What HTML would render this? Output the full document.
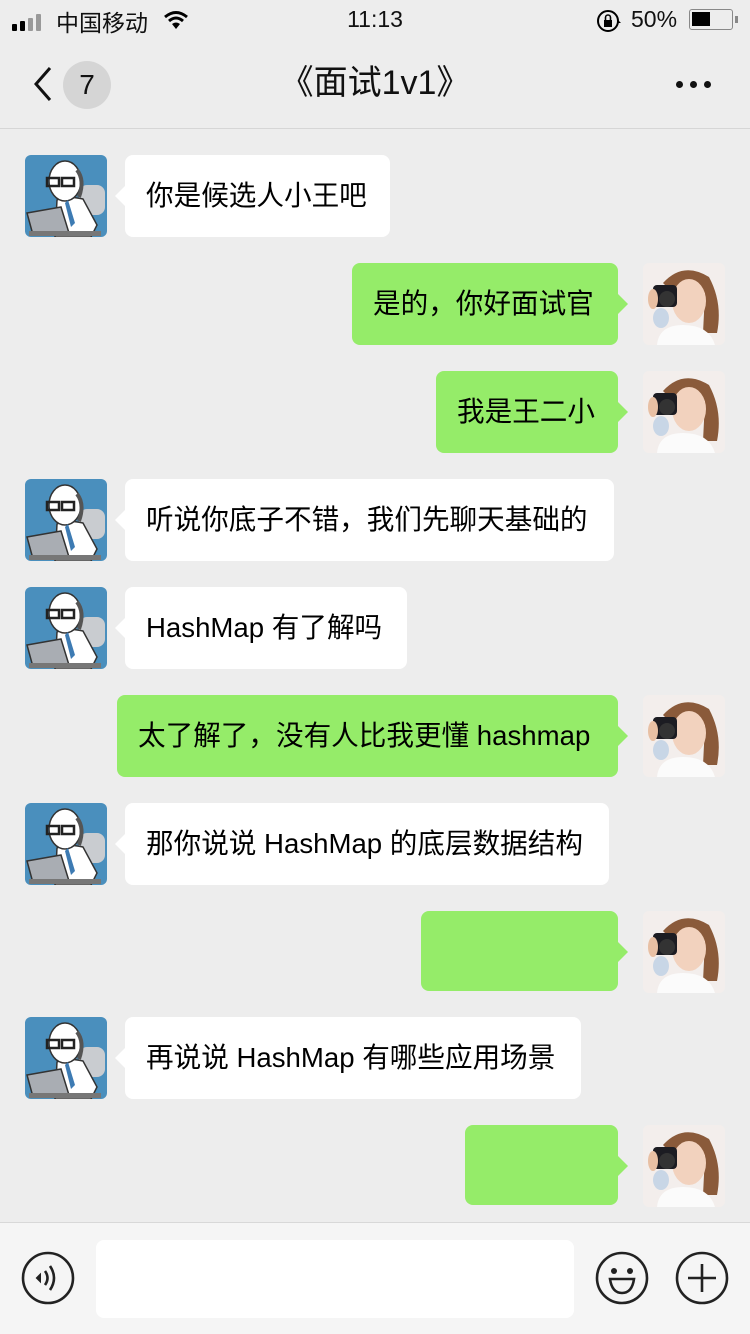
<!DOCTYPE html>
<html><head><meta charset="utf-8"><style>
*{margin:0;padding:0;box-sizing:border-box}
body{width:750px;height:1334px;background:#ededed;position:relative;overflow:hidden;font-family:"Liberation Sans","Noto Sans CJK SC",sans-serif;color:#111}
.abs{position:absolute}
.b{position:absolute;height:82px;border-radius:8px;font-size:27.6px;line-height:82px;padding:0 21px;white-space:nowrap;color:#000}
.l{background:#fff;left:125px}
.l:before{content:"";position:absolute;left:-10px;top:31px;border:10px solid transparent;border-left:0;border-right-color:#fff}
.r{background:#95ec69;right:132px}
.r:after{content:"";position:absolute;right:-10px;top:31px;border:10px solid transparent;border-right:0;border-left-color:#95ec69}
.av{position:absolute;width:82px;height:82px;border-radius:6px;overflow:hidden}
.t{left:25px}.g{left:643px}
</style></head><body>
<svg width="0" height="0" style="position:absolute"><defs>
<symbol id="tch" viewBox="0 0 82 82"><rect width="82" height="82" fill="#4a8fbd"/><rect x="54" y="30" width="26" height="30" rx="8" fill="#c9ccd0"/><path d="M30 82 L32 45 Q40 40 58 44 L72 70 L66 82Z" fill="#fff" stroke="#333" stroke-width="1.5"/><ellipse cx="40" cy="26" rx="16" ry="20" fill="#fff" stroke="#333" stroke-width="1.5"/><path d="M52 15 Q60 25 54 42" stroke="#555" stroke-width="4" fill="none"/><rect x="22" y="23" width="12" height="8" fill="none" stroke="#222" stroke-width="2.5"/><rect x="37" y="23" width="12" height="8" fill="none" stroke="#222" stroke-width="2.5"/><path d="M43 45 L50 68 L46 72 L40 48Z" fill="#3d7bb3"/><path d="M2 58 L36 52 L44 78 L8 80Z" fill="#a9adb3" stroke="#333" stroke-width="1.5"/><rect x="4" y="76" width="72" height="5" fill="#777"/></symbol>
<symbol id="girl" viewBox="0 0 82 82"><rect width="82" height="82" fill="#f3eeec"/><path d="M20 20 Q40 -2 66 14 Q80 40 74 70 L60 70 L62 30 L30 30Z" fill="#8a5a3a"/><ellipse cx="46" cy="38" rx="17" ry="22" fill="#f2d2be"/><path d="M14 82 Q16 62 40 62 Q66 62 72 82Z" fill="#fbfbfb"/><rect x="10" y="22" width="24" height="22" rx="4" fill="#1c1c22"/><circle cx="24" cy="36" r="8" fill="#333"/><ellipse cx="18" cy="55" rx="8" ry="10" fill="#c8d6e6"/><ellipse cx="10" cy="36" rx="5" ry="10" fill="#e8c0a4"/></symbol>
</defs></svg>

<div class="abs" style="left:12px;top:14px;display:flex;align-items:flex-end;gap:3px">
<div style="width:5px;height:7px;background:#000;border-radius:1px"></div><div style="width:5px;height:10px;background:#000;border-radius:1px"></div><div style="width:5px;height:13px;background:#999;border-radius:1px"></div><div style="width:5px;height:17px;background:#999;border-radius:1px"></div></div>
<div class="abs" style="left:56px;top:4px;font-size:23px;color:#111">中国移动</div>
<svg class="abs" style="left:163px;top:10px" width="26" height="20" viewBox="0 0 26 20"><path d="M2 7 Q13 -2 24 7" stroke="#000" stroke-width="3" fill="none"/><path d="M6 11 Q13 5 20 11" stroke="#000" stroke-width="3" fill="none"/><path d="M9 14 L13 19 L17 14 Q13 11 9 14Z" fill="#000"/></svg>
<div class="abs" style="left:0;width:750px;top:6px;text-align:center;font-size:23px">11:13</div>
<svg class="abs" style="left:596px;top:8px" width="26" height="26" viewBox="0 0 26 26"><circle cx="12" cy="13" r="10" stroke="#000" stroke-width="2" fill="none"/><rect x="8" y="12" width="8" height="7" fill="#000"/><path d="M9.5 12 V9.5 a2.5 2.5 0 0 1 5 0 V12" stroke="#000" stroke-width="1.6" fill="none"/><path d="M22 12 l3 3 h-4z" fill="#000"/></svg>
<div class="abs" style="left:631px;top:6px;font-size:23px">50%</div>
<div class="abs" style="left:689px;top:9px;width:44px;height:21px;border:1.5px solid #888;border-radius:3px"><div style="margin:2px;width:18px;height:14px;background:#000"></div></div>
<div class="abs" style="left:735px;top:16px;width:3px;height:7px;background:#888"></div>

<svg class="abs" style="left:32px;top:66px" width="22" height="36" viewBox="0 0 22 36"><path d="M18 2 L4 18 L18 34" stroke="#111" stroke-width="3" fill="none"/></svg>
<div class="abs" style="left:63px;top:61px;width:48px;height:48px;border-radius:24px;background:#d5d5d5;text-align:center;line-height:48px;font-size:28px">7</div>
<div class="abs" style="left:0;width:750px;top:61px;text-align:center;font-size:34px;line-height:44px">《面试1v1》</div>
<div class="abs" style="left:676px;top:81px;display:flex;gap:7px"><i style="width:7px;height:7px;border-radius:4px;background:#111"></i><i style="width:7px;height:7px;border-radius:4px;background:#111"></i><i style="width:7px;height:7px;border-radius:4px;background:#111"></i></div>
<div class="abs" style="left:0;top:128px;width:750px;height:1px;background:#d6d6d6"></div>

<svg class="av t" style="top:155px"><use href="#tch"/></svg><div class="b l" style="top:155px;width:265px">你是候选人小王吧</div>
<svg class="av g" style="top:263px"><use href="#girl"/></svg><div class="b r" style="top:263px;width:266px">是的，你好面试官</div>
<svg class="av g" style="top:371px"><use href="#girl"/></svg><div class="b r" style="top:371px;width:182px">我是王二小</div>
<svg class="av t" style="top:479px"><use href="#tch"/></svg><div class="b l" style="top:479px;width:489px">听说你底子不错，我们先聊天基础的</div>
<svg class="av t" style="top:587px"><use href="#tch"/></svg><div class="b l" style="top:587px;width:282px">HashMap 有了解吗</div>
<svg class="av g" style="top:695px"><use href="#girl"/></svg><div class="b r" style="top:695px;width:501px">太了解了，没有人比我更懂 hashmap</div>
<svg class="av t" style="top:803px"><use href="#tch"/></svg><div class="b l" style="top:803px;width:484px">那你说说 HashMap 的底层数据结构</div>
<svg class="av g" style="top:911px"><use href="#girl"/></svg><div class="b r" style="top:911px;width:197px;height:80px"></div>
<svg class="av t" style="top:1017px"><use href="#tch"/></svg><div class="b l" style="top:1017px;width:456px">再说说 HashMap 有哪些应用场景</div>
<svg class="av g" style="top:1125px"><use href="#girl"/></svg><div class="b r" style="top:1125px;width:153px;height:80px"></div>

<div class="abs" style="left:0;top:1222px;width:750px;height:112px;background:#f5f5f5;border-top:1px solid #d8d8d8"></div>
<div class="abs" style="left:96px;top:1240px;width:478px;height:78px;background:#fff;border-radius:8px"></div>
<svg class="abs" style="left:20px;top:1250px" width="56" height="56" viewBox="0 0 56 56"><circle cx="28" cy="28" r="25" stroke="#222" stroke-width="2.6" fill="none"/><path d="M20 25 l-3 3 l3 3z" fill="#222" stroke="#222" stroke-width="2"/><path d="M25 21 q5 7 0 14" stroke="#222" stroke-width="2.6" fill="none"/><path d="M30 16 q8 12 0 24" stroke="#222" stroke-width="2.6" fill="none"/></svg>
<svg class="abs" style="left:594px;top:1250px" width="56" height="56" viewBox="0 0 56 56"><circle cx="28" cy="28" r="25" stroke="#222" stroke-width="2.6" fill="none"/><circle cx="20" cy="21" r="3" fill="#222"/><circle cx="36" cy="21" r="3" fill="#222"/><path d="M16 29 H40 Q38 43 28 43 Q18 43 16 29Z" stroke="#222" stroke-width="2.6" fill="none"/></svg>
<svg class="abs" style="left:674px;top:1250px" width="56" height="56" viewBox="0 0 56 56"><circle cx="28" cy="28" r="25" stroke="#222" stroke-width="2.6" fill="none"/><path d="M28 14 V42 M14 28 H42" stroke="#222" stroke-width="2.6"/></svg>
</body></html>
